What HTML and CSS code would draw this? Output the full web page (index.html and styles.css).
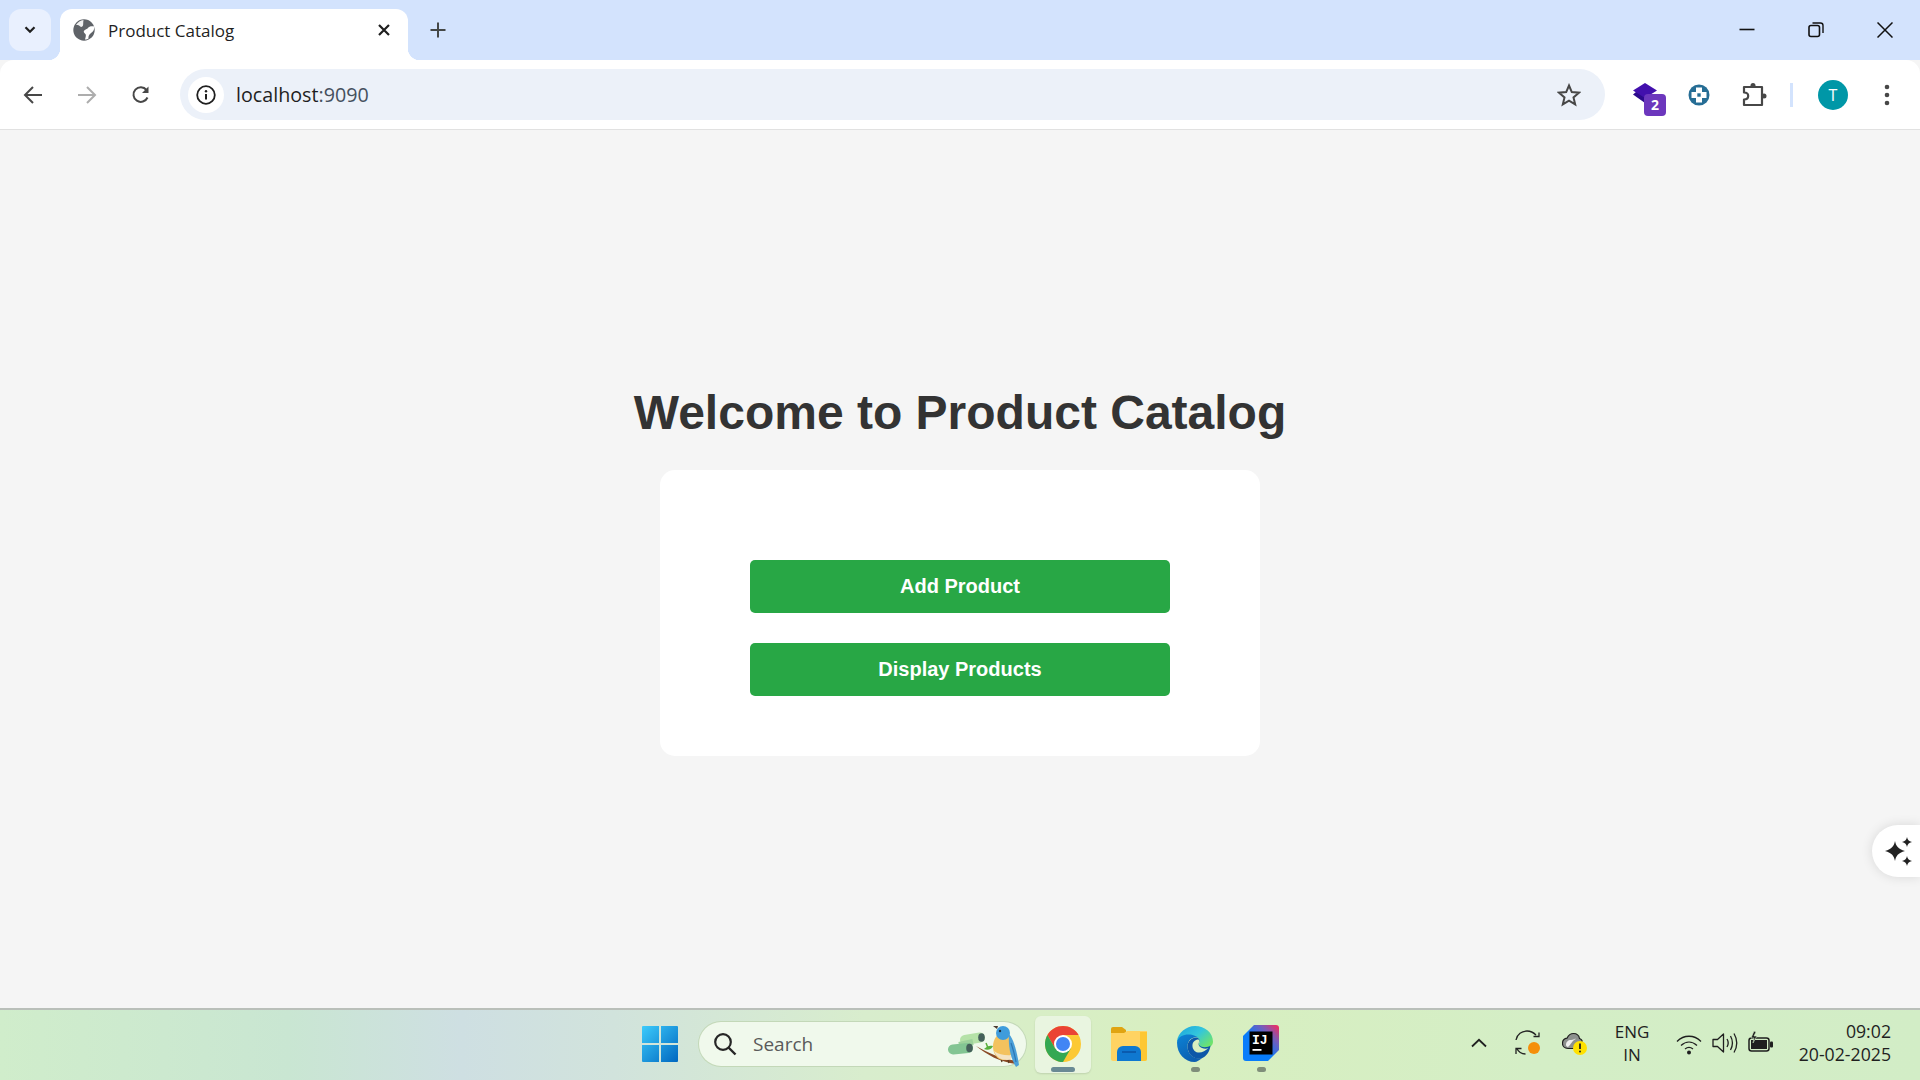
FILE: index.html
```html
<!DOCTYPE html>
<html lang="en">
<head>
<meta charset="UTF-8">
<meta name="viewport" content="width=device-width, initial-scale=1.0">
<title>Product Catalog</title>
<link rel="stylesheet" href="styles.css">
</head>
<body>

<!-- browser tab strip -->
<div class="tabstrip">
    <div class="tab-search">
        <svg width="14" height="10" viewBox="0 0 14 10"><path d="M2.5 2.2 7 6.8l4.5-4.6" fill="none" stroke="#1f1f1f" stroke-width="2.2"/></svg>
    </div>
    <div class="tab">
        <svg class="favicon" width="22" height="22" viewBox="0 0 22 22">
            <circle cx="11" cy="11" r="10.7" fill="#5f6368"/>
            <path d="M21.500 7.500c-3-.6-5.500-.2-6.500 1.500-.8 1.400-3 1.200-4 2.800-.8 1.300.4 2.400 1.400 3.200.8.700.5 2.600-.4 5.500 1.500 0 2.500-.4 3.500-1-.3-2 .5-3.800 2-5 1.500-1.200 3.800-2.500 4-7Z" fill="#fff"/>
            <path d="M3 6c1.500-.3 3 .2 4 1.300C8 8.500 9.500 8 10 6.500c.4-1.300 0-3 .5-5.500C7.500 1.200 5 3 3 6Z" fill="#fff" opacity=".9"/>
        </svg>
        <span class="tab-title">Product Catalog</span>
        <svg class="tab-close" width="14" height="14" viewBox="0 0 14 14"><path d="M2 2l10 10M12 2 2 12" stroke="#1f1f1f" stroke-width="2.200"/></svg>
    </div>
    <div class="new-tab">
        <svg width="16" height="16" viewBox="0 0 16 16"><path d="M8 .5v15M.5 8h15" stroke="#444746" stroke-width="2"/></svg>
    </div>
    <div class="win-controls">
        <div class="win-btn">
            <svg width="16" height="16" viewBox="0 0 16 16"><path d="M.5 7.500h15" stroke="#111" stroke-width="1.600"/></svg>
        </div>
        <div class="win-btn">
            <svg width="16" height="16" viewBox="0 0 16 16"><rect x="1" y="3.500" width="10.500" height="11" rx="2" fill="none" stroke="#111" stroke-width="1.600"/><path d="M4.500 1H12.500c1.400 0 2.500 1.100 2.500 2.500V11" fill="none" stroke="#111" stroke-width="1.400"/></svg>
        </div>
        <div class="win-btn">
            <svg width="16" height="16" viewBox="0 0 16 16"><path d="M.5.500l15 15M15.500.500l-15 15" stroke="#111" stroke-width="1.500"/></svg>
        </div>
    </div>
</div>

<!-- browser toolbar -->
<div class="toolbar">
    <div class="nav-btn">
        <svg width="20" height="20" viewBox="0 0 20 20"><path d="M19 10H2.500M10 2 2 10l8 8" fill="none" stroke="#474747" stroke-width="2"/></svg>
    </div>
    <div class="nav-btn">
        <svg width="20" height="20" viewBox="0 0 20 20"><path d="M1 10h16.500M10 2l8 8-8 8" fill="none" stroke="#adadad" stroke-width="2"/></svg>
    </div>
    <div class="nav-btn">
        <svg width="20" height="20" viewBox="0 0 20 20"><path d="M16.500 12.500A7.300 7.300 0 1 1 15.500 5" fill="none" stroke="#474747" stroke-width="2"/><path d="M17.500 1.500V8H11Z" fill="#474747"/></svg>
    </div>
    <div class="omnibox">
        <div class="site-info">
            <svg width="20" height="20" viewBox="0 0 20 20"><circle cx="10" cy="10" r="8.800" fill="none" stroke="#1f1f1f" stroke-width="1.800"/><path d="M10 9v5.500" stroke="#1f1f1f" stroke-width="2"/><circle cx="10" cy="6.200" r="1.200" fill="#1f1f1f"/></svg>
        </div>
        <span class="url">localhost<span class="url-port">:9090</span></span>
        <svg class="star" width="24" height="24" viewBox="0 0 24 24"><path d="M12 2.500l2.800 6.600 7.200.6-5.500 4.700 1.700 7-6.200-3.700-6.200 3.700 1.700-7L2 9.700l7.200-.6Z" fill="none" stroke="#474747" stroke-width="2"/></svg>
    </div>
    <div class="ext-area">
        <div class="ext-btn">
            <div class="ext-stack">
                <svg width="26" height="26" viewBox="0 0 26 26"><path d="M3 9 0 11.500 12 20 24 12.500 12 9Z" fill="#2c0a8c"/><path d="M12 0 24 7.500 12 15 0 7.500Z" fill="#4210ad"/></svg>
                <span class="ext-badge">2</span>
            </div>
        </div>
        <div class="ext-btn">
            <svg width="22" height="22" viewBox="0 0 22 22"><circle cx="11" cy="11" r="10.500" fill="#266d95"/><path d="M8 3.500h6V8h4.500v6H14v4.500H8V14H3.500V8H8Z" fill="#fff"/><rect x="9.300" y="9.300" width="3.400" height="3.400" fill="#266d95"/></svg>
        </div>
        <div class="ext-btn ext-puzzle">
            <svg width="26" height="26" viewBox="0 0 26 26"><path d="M3 5H21V23H3V17.500C5.500 17.500 7.200 16 7.200 14S5.500 10.500 3 10.500Z" fill="none" stroke="#474747" stroke-width="2.200" stroke-linejoin="round"/><circle cx="12" cy="3.500" r="2.500" fill="#474747"/><circle cx="23" cy="14" r="2.500" fill="#474747"/></svg>
        </div>
        <div class="ext-sep"></div>
        <div class="ext-btn">
            <div class="avatar">T</div>
        </div>
        <div class="ext-btn">
            <svg width="6" height="22" viewBox="0 0 6 22"><circle cx="3" cy="3" r="2.300" fill="#474747"/><circle cx="3" cy="11" r="2.300" fill="#474747"/><circle cx="3" cy="19" r="2.300" fill="#474747"/></svg>
        </div>
    </div>
</div>

<!-- the page itself -->
<main class="page">
    <h1>Welcome to Product Catalog</h1>
    <div class="card">
        <button class="btn">Add Product</button>
        <button class="btn">Display Products</button>
    </div>
    <div class="sparkle-btn">
        <svg width="30" height="30" viewBox="0 0 30 30">
            <path d="M11 4c1 5.200 3 7.800 10 10-7 2.200-9 4.800-10 10-1-5.200-3-7.800-10-10 7-2.200 9-4.800 10-10Z" fill="#222"/>
            <path d="M23 0c.5 2.800 1.700 4 5 5-3.300 1-4.500 2.200-5 5-.5-2.800-1.700-4-5-5 3.300-1 4.500-2.200 5-5ZM23 19c.5 2.800 1.700 4 5 5-3.300 1-4.500 2.200-5 5-.5-2.800-1.700-4-5-5 3.300-1 4.500-2.200 5-5Z" fill="#222"/>
        </svg>
    </div>
</main>

<!-- windows taskbar -->
<footer class="taskbar">
    <div class="task-center">
        <svg class="start-icon" width="36" height="36" viewBox="0 0 36 36">
            <defs>
                <linearGradient id="winBlue" x1="0" y1="0" x2="1" y2="1"><stop offset="0" stop-color="#3ccbfb"/><stop offset="1" stop-color="#0067c0"/></linearGradient>
            </defs>
            <path d="M1 0H17V17H0V1a1 1 0 0 1 1-1ZM19 0H35a1 1 0 0 1 1 1V17H19ZM0 19H17V36H1a1 1 0 0 1-1-1ZM19 19H36V35a1 1 0 0 1-1 1H19Z" fill="url(#winBlue)"/>
        </svg>
        <div class="search-box">
            <svg width="24" height="24" viewBox="0 0 24 24"><circle cx="10" cy="10" r="7.800" fill="none" stroke="#262626" stroke-width="2.200"/><path d="M15.500 15.500l7 7" stroke="#262626" stroke-width="2.400"/></svg>
            <span class="search-text">Search</span>
            <svg class="search-art" width="74" height="46" viewBox="0 0 74 46">
                <!-- binoculars -->
                <path d="M17 18 32 15.500" stroke="#b5e2a8" stroke-width="10" stroke-linecap="round"/>
                <path d="M11 23 25 20" stroke="#9ed29c" stroke-width="6"/>
                <path d="M5 27.500 20 26" stroke="#83c593" stroke-width="10" stroke-linecap="round"/>
                <ellipse cx="33.500" cy="15.500" rx="3.300" ry="4.300" fill="#44605a"/>
                <ellipse cx="21.500" cy="26" rx="3.300" ry="4.300" fill="#44605a"/>
                <!-- branch and leaf -->
                <path d="M28 24c12 7 26 13 41 15l-1 3C52 40 39 33 28 24Z" fill="#8a4a26"/>
                <path d="M36 27c3-3 6-4 9-3-1 3-5 5-9 3Z" fill="#58b03c"/>
                <path d="M38 21l2 5" stroke="#58b03c" stroke-width="1.500"/>
                <!-- bird -->
                <path d="M53 37l1 3M60 38l1 3" stroke="#5a3a20" stroke-width="1.300"/>
                <ellipse cx="55" cy="24.500" rx="10" ry="13.500" fill="#f3c25e"/>
                <path d="M46 29c2 6 7 9 13 9 3 0 5-2 6-5-6 1-14 0-19-4Z" fill="#f4e3c2"/>
                <circle cx="55" cy="11" r="7" fill="#3f9cdc"/>
                <path d="M61 12c5 6 8 18 10 31l-3 2c-5-8-8-20-7-33Z" fill="#4a9fd8"/>
                <path d="M63 21c2 6 4 13 5 19" stroke="#2d76b4" stroke-width="1.200" fill="none"/>
                <path d="M49 7l-4-3 5 0Z" fill="#4a3a30"/>
                <circle cx="52" cy="9" r="1.200" fill="#1d2a38"/>
            </svg>
        </div>
        <div class="task-app is-active">
            <svg width="36" height="36" viewBox="4 4 40 40">
                <circle cx="24" cy="24" r="20" fill="#fcc934"/>
                <path d="M6.680 14A20 20 0 0 1 41.320 14H24L15.340 29Z" fill="#ea4335"/>
                <path d="M6.680 14 15.340 29H32.660L24 44A20 20 0 0 1 6.680 14Z" fill="#34a853"/>
                <circle cx="24" cy="24" r="10" fill="#fff"/>
                <circle cx="24" cy="24" r="7.800" fill="#4285f4"/>
            </svg>
            <span class="app-mark mark-wide"></span>
        </div>
        <div class="task-app">
            <svg width="36" height="34" viewBox="0 0 36 34">
                <path d="M0 2a2 2 0 0 1 2-2h9l4 3v4H0Z" fill="#e0a412"/>
                <path d="M0 6h13l3-2h20v28a2 2 0 0 1-2 2H2a2 2 0 0 1-2-2Z" fill="#ffd362"/>
                <path d="M36 5V32a2 2 0 0 1-2 2H29V5Z" fill="#fcc21e" opacity=".7"/>
                <path d="M6 34V25a6 6 0 0 1 6-6H24a6 6 0 0 1 6 6V34Z" fill="#0f78d0"/>
                <path d="M11 25h14" stroke="#0a55a5" stroke-width="1.600"/>
            </svg>
        </div>
        <div class="task-app">
            <svg width="36" height="36" viewBox="0 0 36 36">
                <defs>
                    <linearGradient id="edgeTop" x1="0" y1="0" x2="1" y2=".7"><stop offset="0" stop-color="#1aa3dd"/><stop offset=".55" stop-color="#33c6dc"/><stop offset="1" stop-color="#6ee36c"/></linearGradient>
                    <linearGradient id="edgeBase" x1="0" y1="0" x2=".5" y2="1"><stop offset="0" stop-color="#0c83d6"/><stop offset="1" stop-color="#0d5fb0"/></linearGradient>
                </defs>
                <path d="M18 0C28 0 36 7 36 15.500c0 4-3 6.500-8 6.500-4 0-6.500-1-6.500-3 0-1 1-1.500 1-3.500C22.500 12 19 10 16 10.500 10 11.500 8 18 5 22 2 20 0 14 0 15 1 7 9 0 18 0Z" fill="url(#edgeTop)"/>
                <path d="M0 16.500C1 9.500 8 8 13 8.500c5 .5 8 3 8 3-6-1-10.500 3-10.500 9 0 7 6 13 14 12-2 1.500-4.500 3.500-7 3.500C8 36 0 28 0 16.500Z" fill="url(#edgeBase)"/>
                <path d="M10.500 20.500c0-5 4-9 9-9 3 .4 3.500 3 2.500 5-.8 1.800.4 3.300 2 4 3 1.200 7.500.7 9.500-1-.7 6-4 11-9 13-8 1.500-14-5-14-12Z" fill="#0d57a8"/>
                <path d="M15.500 18.500c.6-3.500 3.500-5 6-5 1 .6.800 2 .4 3-1 2.500.6 4.600 3.100 5.500 2.500 1 5 .7 6.500 0-3 3-7 5-10.500 4.500-4-.6-6-4.500-5.500-8Z" fill="#d8efc0"/>
            </svg>
            <span class="app-mark"></span>
        </div>
        <div class="task-app">
            <svg class="ij-icon" width="36" height="36" viewBox="0 0 36 36">
                <defs>
                    <linearGradient id="ijGrad" x1="0" y1="1" x2="1" y2="0"><stop offset=".45" stop-color="#087cfa"/><stop offset=".75" stop-color="#7a5bb8"/><stop offset="1" stop-color="#fe2857"/></linearGradient>
                </defs>
                <path d="M11 0H33a3 3 0 0 1 3 3V25L25 36H3a3 3 0 0 1-3-3V11Z" fill="url(#ijGrad)"/>
                <rect x="6.500" y="6.500" width="23" height="23" fill="#000"/>
                <text x="9" y="19" class="ij-text">IJ</text>
                <rect x="9.500" y="24" width="9" height="1.800" fill="#fff"/>
            </svg>
            <span class="app-mark"></span>
        </div>
    </div>
    <div class="tray">
        <svg class="tray-chevron" width="16" height="10" viewBox="0 0 16 10"><path d="M1 8.500 8 1.800l7 6.700" fill="none" stroke="#1f1f1f" stroke-width="1.800"/></svg>
        <div class="tray-icon tray-sync">
            <svg width="26" height="26" viewBox="0 0 26 26"><path d="M1 10C2 4 7 1 12 1c4 0 7 2 9 4M24 2.500V6.500H18.500M1 24V18.500H6.500M1.500 18c2 4 5 6 9 6" fill="none" stroke="#222" stroke-width="1.300"/><circle cx="19" cy="18" r="6" fill="#f58f0a"/></svg>
        </div>
        <div class="tray-icon tray-cloud">
            <svg width="26" height="26" viewBox="0 0 26 26"><path d="M6 18.500c-3.500 0-5.500-2.500-5.500-5 0-3 2-5 4.500-5.300C6.500 5 9 3.500 11.500 3.500c3 0 5.500 2 6 5 1 .4 2 1 2.500 2v5l-8 3Z" fill="#8d918e" stroke="#1f1f1f" stroke-width="1.200"/><path d="M4 15c0-3 2-5 5-5s3-2 5-1c-4 1-5 6-8 8-1-.3-2-1-2-2Z" fill="#f0f0f0"/><circle cx="18" cy="18" r="7" fill="#ffe100"/><path d="M18 13.500v5.500" stroke="#222" stroke-width="1.800"/><circle cx="18" cy="21.500" r="1" fill="#222"/></svg>
        </div>
        <div class="tray-lang"><span>ENG</span><span>IN</span></div>
        <svg class="tray-wifi" width="26" height="20" viewBox="0 0 26 20"><path d="M1 6.500C8-.5 18-.5 25 6.500M5 10.500c5-4.500 11-4.500 16 0M9 14c2.500-2 5.500-2 8 0" fill="none" stroke="#1f1f1f" stroke-width="1.300"/><circle cx="13" cy="17.500" r="2" fill="#1f1f1f"/></svg>
        <svg class="tray-sound" width="26" height="24" viewBox="0 0 26 24"><path d="M1 8.500h4.500L11.500 3v18L5.500 15.500H1Z" fill="none" stroke="#1f1f1f" stroke-width="1.300" stroke-linejoin="round"/><path d="M15 8c1.500 2.500 1.500 5.500 0 8M18.500 5c2.500 4.500 2.500 9.500 0 14M22 2.500c3.500 6 3.500 13 0 19" fill="none" stroke="#1f1f1f" stroke-width="1.300"/></svg>
        <svg class="tray-battery" width="26" height="24" viewBox="0 0 26 24"><rect x="1" y="7" width="20" height="13" rx="2.500" fill="none" stroke="#1f1f1f" stroke-width="1.500"/><rect x="3" y="9" width="16" height="9" fill="#1f1f1f"/><rect x="22" y="10.500" width="3" height="6" rx="1" fill="#1f1f1f"/><path d="M6 0 3 7h3l-1 5 4-7H6l2-4Z" fill="#1f1f1f" stroke="#d2edc6" stroke-width=".6"/></svg>
        <div class="tray-clock"><span>09:02</span><span>20-02-2025</span></div>
    </div>
</footer>

</body>
</html>
```

FILE: styles.css
```css
* {
    box-sizing: border-box;
}

html,
body {
    height: 100%;
}

body {
    margin: 0;
    display: flex;
    flex-direction: column;
    overflow: hidden;
    font-family: "Open Sans", "Noto Sans", sans-serif;
    background-color: #f5f5f5;
}

/* tab strip */
.tabstrip {
    height: 60px;
    padding: 9px 0 0 9px;
    display: flex;
    background-color: #d3e3fd;
}

.tab-search {
    width: 42px;
    height: 42px;
    margin-right: 9px;
    border-radius: 12px;
    background-color: #e9f0fe;
    display: flex;
    align-items: center;
    justify-content: center;
}

.tab {
    position: relative;
    width: 348px;
    height: 51px;
    padding: 0 17px 9px 13px;
    border-radius: 12px 12px 0 0;
    background-color: #fff;
    display: flex;
    align-items: center;
}

.tab::before,
.tab::after {
    content: "";
    position: absolute;
    bottom: 0;
    width: 12px;
    height: 12px;
}

.tab::before {
    left: -12px;
    background: radial-gradient(circle at 0 0, #d3e3fd 12px, #fff 12.5px);
}

.tab::after {
    right: -12px;
    background: radial-gradient(circle at 100% 0, #d3e3fd 12px, #fff 12.5px);
}

.favicon {
    flex-shrink: 0;
}

.tab-title {
    margin-left: 13px;
    font-size: 17px;
    color: #1f1f1f;
    white-space: nowrap;
}

.tab-close {
    margin-left: auto;
}

.new-tab {
    width: 42px;
    height: 42px;
    margin-left: 9px;
    display: flex;
    align-items: center;
    justify-content: center;
}

.win-controls {
    margin-left: auto;
    margin-top: -9px;
    padding-right: 1px;
    display: flex;
}

.win-btn {
    width: 69px;
    height: 60px;
    display: flex;
    align-items: center;
    justify-content: center;
}

/* toolbar */
.toolbar {
    height: 70px;
    padding: 9px 0 9px 12px;
    border-radius: 14px 14px 0 0;
    border-bottom: 1px solid #e1e1e1;
    background-color: #fff;
    display: flex;
    align-items: center;
    gap: 12px;
    position: relative;
}

.nav-btn {
    width: 42px;
    height: 42px;
    display: flex;
    align-items: center;
    justify-content: center;
}

.omnibox {
    flex: 1;
    height: 51px;
    margin-left: 6px;
    padding: 0 24px 0 8px;
    border-radius: 26px;
    background-color: #ecf1f9;
    display: flex;
    align-items: center;
}

.site-info {
    width: 36px;
    height: 36px;
    border-radius: 50%;
    background-color: #fff;
    display: flex;
    align-items: center;
    justify-content: center;
}

.url {
    margin-left: 12px;
    font-size: 19.7px;
    color: #1f1f1f;
}

.url-port {
    color: #45505e;
}

.star {
    margin-left: auto;
}

.ext-area {
    width: 315px;
    margin-left: -12px;
    padding-left: 13px;
    display: flex;
    align-items: center;
}

.ext-btn {
    width: 54px;
    height: 42px;
    display: flex;
    align-items: center;
    justify-content: center;
    flex-shrink: 0;
}

.ext-puzzle svg {
    margin-left: 2px;
}

.ext-sep {
    width: 3px;
    height: 24px;
    margin: 0 13px 0 10px;
    background-color: #d3e3fd;
}

.ext-stack {
    position: relative;
    width: 26px;
    height: 26px;
    transform: translate(1px, 1px);
}

.ext-badge {
    position: absolute;
    left: 11px;
    top: 11px;
    width: 22px;
    height: 22px;
    border-radius: 4px;
    background-color: #6c37bd;
    color: #fff;
    font-size: 14px;
    font-weight: 700;
    line-height: 22px;
    text-align: center;
}

.avatar {
    width: 30px;
    height: 30px;
    border-radius: 50%;
    background-color: #0097a7;
    color: #fff;
    font-size: 16px;
    line-height: 30px;
    text-align: center;
}

/* page content */
.page {
    flex: 1;
    position: relative;
    padding-top: 3px;
    display: flex;
    flex-direction: column;
    align-items: center;
    justify-content: center;
    font-family: "Liberation Sans", Arial, sans-serif;
}

h1 {
    margin: 0 0 30px;
    font-size: 48px;
    font-weight: 700;
    color: #333;
}

.card {
    width: 600px;
    height: 286px;
    padding: 90px;
    border-radius: 15px;
    background-color: #fff;
    display: flex;
    flex-direction: column;
    gap: 30px;
}

.btn {
    width: 100%;
    height: 53px;
    padding: 0;
    border: none;
    border-radius: 5px;
    background-color: #28a745;
    color: #fff;
    font-family: inherit;
    font-size: 20px;
    font-weight: 700;
    flex-shrink: 0;
}

.sparkle-btn {
    position: absolute;
    right: 0;
    top: 695px;
    width: 48px;
    height: 52px;
    padding: 12px 0 0 12px;
    border-radius: 26px 0 0 26px;
    background-color: #fff;
    box-shadow: 0 0 12px rgba(0, 0, 0, 0.12);
}

/* taskbar */
.taskbar {
    height: 72px;
    flex-shrink: 0;
    padding: 0 0 2px 642px;
    border-top: 2px solid #b9bfb9;
    background: linear-gradient(90deg, #d0edcb 0%, #c9e6d2 15%, #cedfe2 24%, #d1e3dc 32%, #d8edcd 45%, #d8efc0 62%, #d4eec6 80%, #d2edc6 100%);
    display: flex;
    align-items: center;
}

.task-center {
    display: flex;
    align-items: center;
}

.start-icon {
    margin-right: 21px;
}

.search-box {
    position: relative;
    width: 327px;
    height: 44px;
    padding-left: 14px;
    margin-right: 9px;
    border-radius: 22px;
    background-color: #f0f9ec;
    box-shadow: 0 0 0 1px #c3d8b8;
    display: flex;
    align-items: center;
}

.search-text {
    margin-left: 16px;
    font-size: 19px;
    color: #5a5a5a;
}

.search-art {
    position: absolute;
    right: 4px;
    top: 0;
}

.task-app {
    position: relative;
    width: 56px;
    height: 57px;
    margin-right: 10px;
    border-radius: 6px;
    display: flex;
    align-items: center;
    justify-content: center;
}

.task-app.is-active {
    background-color: #e9f5e0;
    box-shadow: 0 1px 2px rgba(0, 0, 0, 0.12);
}

.ij-icon {
    margin-top: -2px;
}

.ij-text {
    font-family: "Liberation Mono", monospace;
    font-size: 13px;
    font-weight: 700;
    fill: #fff;
}

.app-mark {
    position: absolute;
    bottom: 1px;
    left: 50%;
    width: 9px;
    height: 5px;
    margin-left: -4.5px;
    border-radius: 3px;
    background-color: #7f8e7a;
}

.app-mark.mark-wide {
    width: 24px;
    margin-left: -12px;
    background-color: #6a8a94;
}

.tray {
    position: absolute;
    left: 1471px;
    right: 29px;
    bottom: 2px;
    height: 70px;
    display: flex;
    align-items: center;
}

.tray-chevron {
    flex-shrink: 0;
}

.tray-icon {
    width: 26px;
    height: 26px;
    flex-shrink: 0;
}

.tray-sync {
    margin-left: 28px;
}

.tray-cloud {
    margin-left: 21px;
}

.tray-lang,
.tray-clock {
    display: flex;
    flex-direction: column;
    font-size: 17px;
    line-height: 23px;
    color: #1f1f1f;
}

.tray-lang {
    width: 50px;
    margin-left: 19px;
    align-items: center;
}

.tray-wifi {
    margin-left: 19px;
    margin-top: 4px;
}

.tray-sound {
    margin-left: 10px;
}

.tray-battery {
    margin-left: 10px;
}

.tray-clock {
    margin-left: auto;
    align-items: flex-end;
    font-size: 17.7px;
}
```
